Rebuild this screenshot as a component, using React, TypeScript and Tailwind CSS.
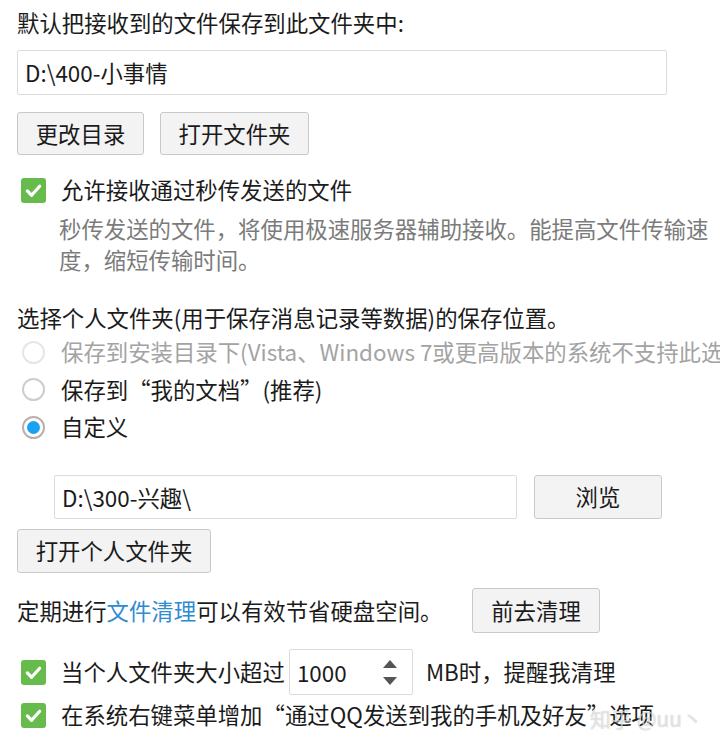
import React from "react";

const font = { fontFamily: '"Noto Sans CJK SC", "Noto Sans", sans-serif' };

function Check() {
  return (
    <div className="w-[25px] h-[25px] rounded-[3px] bg-[#66bb4c] flex items-center justify-center shrink-0">
      <svg width="19" height="19" viewBox="0 0 20 20">
        <path d="M3.5 10.5 L8 15 L16.5 5.5" fill="none" stroke="#fff" strokeWidth="3.4" strokeLinecap="round" strokeLinejoin="round" />
      </svg>
    </div>
  );
}

function Radio({ checked, disabled }: { checked?: boolean; disabled?: boolean }) {
  return (
    <div
      className={
        "w-[23px] h-[23px] rounded-full border-2 bg-white flex items-center justify-center shrink-0 " +
        (checked ? "border-[#b9b0ab]" : disabled ? "border-[#e6e6e6]" : "border-[#cdcdcd]")
      }
    >
      {checked && <div className="w-[13px] h-[13px] rounded-full bg-[#1aa1f2]" />}
    </div>
  );
}

function Btn({ children, className }: { children: React.ReactNode; className?: string }) {
  return (
    <div
      className={
        "flex items-center justify-center bg-[#f3f3f3] border border-[#c9c9c9] rounded-[3px] text-[#1b1b1b] whitespace-nowrap " +
        (className || "")
      }
    >
      {children}
    </div>
  );
}

export default function App() {
  return (
    <div className="w-[720px] h-[748px] bg-white overflow-hidden relative text-[#1b1b1b]" style={font}>
      <div className="pl-[17px] text-[22.4px]">
        <div className="mt-[6px] leading-[32px] whitespace-nowrap">默认把接收到的文件保存到此文件夹中:</div>
        <div className="mt-[12px] w-[650px] h-[45px] border border-[#dcdcdc] rounded-[2px] flex items-center pl-[7px] leading-none">
          D:\400-小事情
        </div>
        <div className="mt-[17px] flex gap-[16px]">
          <Btn className="w-[127px] h-[43px]">更改目录</Btn>
          <Btn className="w-[149px] h-[43px]">打开文件夹</Btn>
        </div>
        <div className="mt-[19px] flex items-center h-[32px] pl-[4px] gap-[15px]">
          <Check />
          <span className="whitespace-nowrap">允许接收通过秒传发送的文件</span>
        </div>
        <div className="mt-[7px] pl-[42px] text-[#7b7b7b] leading-[31px] whitespace-nowrap">
          <div>秒传发送的文件，将使用极速服务器辅助接收。能提高文件传输速</div>
          <div>度，缩短传输时间。</div>
        </div>
        <div className="mt-[26px] leading-[32px] whitespace-nowrap">选择个人文件夹(用于保存消息记录等数据)的保存位置。</div>
        <div className="flex items-center h-[38px] pl-[5px] gap-[16px] whitespace-nowrap text-[#a3a3a3]">
          <Radio disabled />
          <span>保存到安装目录下(Vista、Windows 7或更高版本的系统不支持此选项)</span>
        </div>
        <div className="flex items-center h-[37px] pl-[5px] gap-[16px] whitespace-nowrap">
          <Radio />
          <span>保存到“我的文档”(推荐)</span>
        </div>
        <div className="flex items-center h-[38px] pl-[5px] gap-[16px] whitespace-nowrap">
          <Radio checked />
          <span>自定义</span>
        </div>
        <div className="mt-[29px] pl-[37px] flex gap-[17px]">
          <div className="w-[463px] h-[44px] border border-[#dcdcdc] rounded-[2px] flex items-center pl-[7px] leading-none">
            D:\300-兴趣\
          </div>
          <Btn className="w-[128px] h-[44px]">浏览</Btn>
        </div>
        <div className="mt-[10px]">
          <Btn className="w-[194px] h-[44px]">打开个人文件夹</Btn>
        </div>
        <div className="mt-[15px] flex items-center h-[45px]">
          <div className="w-[455px] whitespace-nowrap">
            定期进行<span className="text-[#2f8bd0]">文件清理</span>可以有效节省硬盘空间。
          </div>
          <Btn className="w-[128px] h-[45px]">前去清理</Btn>
        </div>
        <div className="mt-[16px] flex items-center h-[46px] pl-[4px] whitespace-nowrap">
          <Check />
          <span className="ml-[15px]">当个人文件夹大小超过</span>
          <div className="ml-[4px] w-[124px] h-[46px] border border-[#dcdcdc] rounded-[2px] flex items-center pl-[7px] pr-[15px] justify-between">
            <span className="leading-none">1000</span>
            <div className="flex flex-col items-center gap-[9px]">
              <svg width="14" height="8" viewBox="0 0 14 8"><path d="M7 0 L14 8 L0 8 Z" fill="#555" /></svg>
              <svg width="14" height="8" viewBox="0 0 14 8"><path d="M0 0 L14 0 L7 8 Z" fill="#555" /></svg>
            </div>
          </div>
          <span className="ml-[13px]">MB时，提醒我清理</span>
        </div>
        <div className="flex items-center h-[40px] pl-[4px] whitespace-nowrap">
          <Check />
          <span className="ml-[15px]">在系统右键菜单增加“通过QQ发送到我的手机及好友”选项</span>
        </div>
      </div>
      <div className="absolute left-[590px] top-[704px] text-[21px] text-white/60 whitespace-nowrap leading-[28px] [text-shadow:0_0_1px_rgba(0,0,0,0.3)]">
        知乎 @uu丶
      </div>
    </div>
  );
}
